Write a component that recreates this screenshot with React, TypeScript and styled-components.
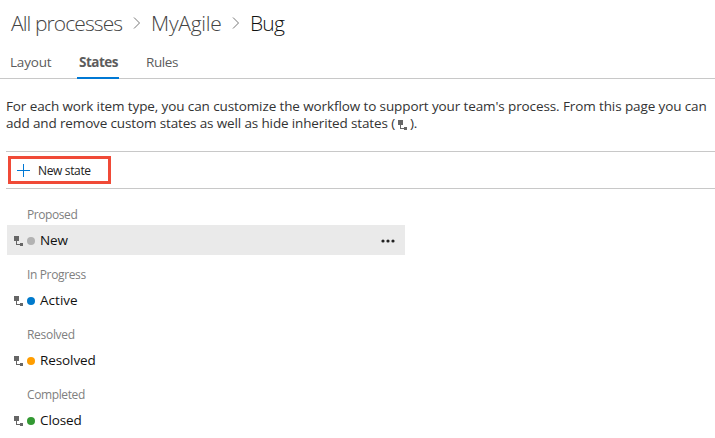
import React from "react";
import styled, { createGlobalStyle } from "styled-components";

const GlobalStyle = createGlobalStyle`
  body { margin: 0; background: #fff; font-family: "Open Sans", "Segoe UI", sans-serif; color: #333; overflow: hidden; }
`;

const Page = styled.main`
  width: 715px;
  height: 438px;
  overflow: hidden;
  white-space: nowrap;
`;

const Breadcrumb = styled.nav`
  display: flex;
  align-items: center;
  height: 47px;
  padding-left: 11px;
  box-sizing: border-box;
`;

const Crumb = styled.span<{ $w: number; $ls: number; $current?: boolean }>`
  width: ${(p) => p.$w}px;
  font-size: 21px;
  font-weight: 300;
  line-height: 47px;
  letter-spacing: ${(p) => p.$ls}px;
  color: ${(p) => (p.$current ? "#111" : "#444")};
`;

const Chevron = styled.svg`
  width: 8px;
  height: 12px;
  margin: 0 10px 2px;
  flex: none;
`;

const Tabs = styled.div`
  display: flex;
  height: 32px;
  box-sizing: border-box;
  box-shadow: inset 0 -1px #c8c8c8;
`;

const Tab = styled.button<{ $w: number; $ls: number; $active?: boolean }>`
  width: ${(p) => p.$w}px;
  height: 32px;
  box-sizing: border-box;
  padding: 1px 0 0 2px;
  border: 0;
  border-bottom: 2px solid ${(p) => (p.$active ? "#0078d4" : "transparent")};
  background: none;
  text-align: left;
  font: ${(p) => (p.$active ? 700 : 400)} 13.5px/29px "Open Sans", sans-serif;
  letter-spacing: ${(p) => p.$ls}px;
  color: #5c5c5c;
  &:first-child { margin-left: 8px; }
  & + & { margin-left: 25px; }
`;

const Intro = styled.p`
  margin: 19px 0 19px 6px;
  font-size: 13.5px;
  line-height: 17px;
`;

const Line = styled.span<{ $ls: number }>`
  display: block;
  height: 17px;
  letter-spacing: ${(p) => p.$ls}px;
`;

const Toolbar = styled.div`
  display: flex;
  height: 38px;
  box-sizing: border-box;
  margin-left: 6px;
  padding: 4px 0 0 2px;
  border-top: 1px solid #c8c8c8;
  border-bottom: 1px solid #c8c8c8;
`;

const NewButton = styled.button`
  display: flex;
  align-items: center;
  width: 103px;
  height: 28px;
  padding: 1px 0 0 6px;
  border: 3px solid #f04a37;
  background: #fff;
  font: 12px/22px "Open Sans", sans-serif;
  letter-spacing: -0.35px;
  color: #222;
`;

const Plus = styled.svg`
  width: 13px;
  height: 13px;
  margin-right: 8px;
`;

const Groups = styled.div`
  padding: 16px 0 0 7px;
`;

const Group = styled.section`
  height: 60px;
  width: 398px;
`;

const GroupLabel = styled.div<{ $ls: number }>`
  height: 20px;
  padding-left: 20px;
  font-size: 12px;
  line-height: 20px;
  letter-spacing: ${(p) => p.$ls}px;
  color: #808080;
`;

const StateRow = styled.div<{ $selected?: boolean }>`
  display: flex;
  align-items: center;
  height: 30px;
  padding: 0 10px 0 7px;
  box-sizing: border-box;
  background: ${(p) => (p.$selected ? "#eaeaea" : "transparent")};
`;

const Inherit = styled.svg<{ $inline?: boolean }>`
  width: 9px;
  height: 10px;
  flex: none;
  vertical-align: ${(p) => (p.$inline ? "-2px" : "middle")};
  margin: ${(p) => (p.$inline ? "0 3px 0 3px" : "2px 0 0 0")};
`;

const Dot = styled.span<{ $color: string }>`
  width: 8px;
  height: 8px;
  margin: 2px 5px 0 4px;
  border-radius: 50%;
  background: ${(p) => p.$color};
`;

const StateName = styled.span<{ $ls: number }>`
  font-size: 13.5px;
  line-height: 30px;
  letter-spacing: ${(p) => p.$ls}px;
  color: #111;
`;

const More = styled.svg`
  width: 14px;
  height: 4px;
  margin: 1px 0 0 auto;
`;

const InheritIcon = ({ inline }: { inline?: boolean }) => (
  <Inherit $inline={inline} viewBox="0 0 9 10" shapeRendering="crispEdges" fill="#666">
    <path d="M0 0h5v5H3v3h3V7h3v3H6V9H2V5H0z" />
  </Inherit>
);

const ChevronIcon = () => (
  <Chevron viewBox="0 0 8 12" fill="none" stroke="#777">
    <path d="M1 .5 6.5 6 1 11.5" />
  </Chevron>
);

const states = [
  { group: "Proposed", gls: -0.42, name: "New", ls: -0.1, color: "#b2b2b2", selected: true },
  { group: "In Progress", gls: -0.36, name: "Active", ls: 0.03, color: "#007acc" },
  { group: "Resolved", gls: -0.3, name: "Resolved", ls: -0.1, color: "#ff9d00" },
  { group: "Completed", gls: -0.38, name: "Closed", ls: -0.1, color: "#339933" },
];

export default function App() {
  return (
    <Page>
      <GlobalStyle />
      <Breadcrumb>
        <Crumb $w={112} $ls={-0.9}>All processes</Crumb>
        <ChevronIcon />
        <Crumb $w={71} $ls={-0.25}>MyAgile</Crumb>
        <ChevronIcon />
        <Crumb $w={40} $ls={-0.8} $current>Bug</Crumb>
      </Breadcrumb>
      <Tabs>
        <Tab $w={44} $ls={-0.2}>Layout</Tab>
        <Tab $w={42} $ls={-0.5} $active>States</Tab>
        <Tab $w={42} $ls={-0.4}>Rules</Tab>
      </Tabs>
      <Intro>
        <Line $ls={-0.11}>For each work item type, you can customize the workflow to support your team's process. From this page you can</Line>
        <Line $ls={-0.14}>add and remove custom states as well as hide inherited states (<InheritIcon inline />).</Line>
      </Intro>
      <Toolbar>
        <NewButton>
          <Plus viewBox="0 0 13 13" stroke="#0078d4"><path d="M0 6.5h13M6.5 0v13" /></Plus>
          New state
        </NewButton>
      </Toolbar>
      <Groups>
        {states.map((s) => (
          <Group key={s.group}>
            <GroupLabel $ls={s.gls}>{s.group}</GroupLabel>
            <StateRow $selected={s.selected}>
              <InheritIcon />
              <Dot $color={s.color} />
              <StateName $ls={s.ls}>{s.name}</StateName>
              {s.selected && (
                <More viewBox="0 0 14 4" fill="#222">
                  <circle cx="2" cy="2" r="1.6" /><circle cx="7" cy="2" r="1.6" /><circle cx="12" cy="2" r="1.6" />
                </More>
              )}
            </StateRow>
          </Group>
        ))}
      </Groups>
    </Page>
  );
}
